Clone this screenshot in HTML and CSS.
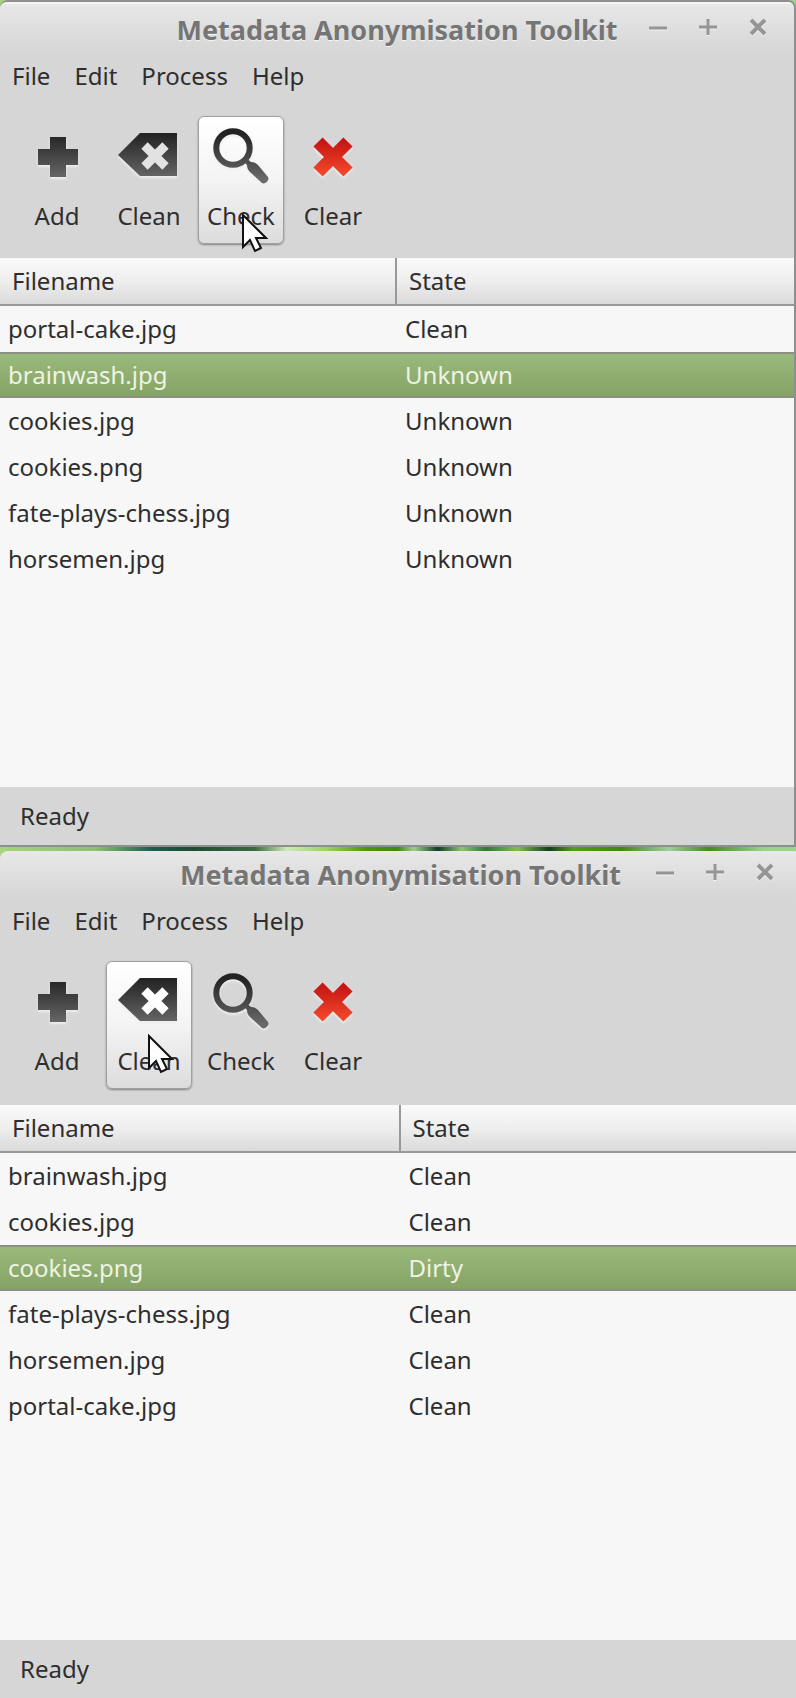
FILE: index.html
```html
<!DOCTYPE html>
<html lang="en">
<head>
    <meta charset="UTF-8">
    <meta name="viewport" content="width=device-width, initial-scale=1.0">
    <title>Metadata Anonymisation Toolkit</title>
    <link rel="stylesheet" href="styles.css">
</head>
<body>

    <!-- shared icons -->
    <svg class="sprite" aria-hidden="true">
        <defs>
            <linearGradient id="dark" gradientUnits="userSpaceOnUse" x1="0" y1="9" x2="0" y2="56">
                <stop offset="0" stop-color="#222"/>
                <stop offset="1" stop-color="#6a6a6a"/>
            </linearGradient>
            <linearGradient id="red" gradientUnits="userSpaceOnUse" x1="0" y1="13" x2="0" y2="52">
                <stop offset="0" stop-color="#c01010"/>
                <stop offset="1" stop-color="#f54a2c"/>
            </linearGradient>
        </defs>
        <symbol id="icon-add" viewBox="0 0 64 64">
            <path fill="url(#dark)" d="M25 13h16v12h12v16H41v12H25V41H13V25h12z"/>
        </symbol>
        <symbol id="icon-clean" viewBox="0 0 64 64">
            <path fill="url(#dark)" d="M1 31L23 9h37v43H23z"/>
            <path stroke="currentColor" stroke-width="9" d="M27.500 21.500l21 21M48.500 21.500l-21 21"/>
        </symbol>
        <symbol id="icon-check" viewBox="0 0 64 64">
            <circle cx="24" cy="24" r="16.700" fill="none" stroke="url(#dark)" stroke-width="6"/>
            <path fill="url(#dark)" d="M34 37l3-3 5 4c3 0 5 1 7 3l10 12c2 3-3 8-6 6L41 48c-2-2-3-4-3-7z"/>
        </symbol>
        <symbol id="icon-clear" viewBox="0 0 64 64">
            <path stroke="url(#red)" stroke-width="13" d="M17 18l30 30M47 18L17 48"/>
        </symbol>
        <symbol id="pointer" viewBox="0 0 26 40">
            <path fill="#fff" stroke="#111" stroke-width="2" d="M1 2v32l7-7 5 11 6-3-5-10h10z"/>
        </symbol>
        <symbol id="win-min" viewBox="0 0 20 20">
            <path stroke="currentColor" stroke-width="3" d="M1 11h18"/>
        </symbol>
        <symbol id="win-max" viewBox="0 0 20 20">
            <path stroke="currentColor" stroke-width="3" d="M1 10h18M10 2v16"/>
        </symbol>
        <symbol id="win-close" viewBox="0 0 20 20">
            <path stroke="currentColor" stroke-width="4" d="M3 3l14 14M17 3L3 17"/>
        </symbol>
    </svg>

    <section class="window framed">
        <header class="titlebar">
            <h1>Metadata Anonymisation Toolkit</h1>
            <div class="controls">
                <button type="button" aria-label="Minimize"><svg><use href="#win-min"/></svg></button>
                <button type="button" aria-label="Maximize"><svg><use href="#win-max"/></svg></button>
                <button type="button" aria-label="Close"><svg><use href="#win-close"/></svg></button>
            </div>
        </header>
        <nav class="menubar">
            <button type="button">File</button>
            <button type="button">Edit</button>
            <button type="button">Process</button>
            <button type="button">Help</button>
        </nav>
        <div class="toolbar">
            <button type="button"><svg><use href="#icon-add"/></svg>Add</button>
            <button type="button"><svg><use href="#icon-clean"/></svg>Clean</button>
            <button type="button" class="active"><svg><use href="#icon-check"/></svg>Check<svg class="pointer on-check"><use href="#pointer"/></svg></button>
            <button type="button"><svg><use href="#icon-clear"/></svg>Clear</button>
        </div>
        <div class="files">
            <table>
                <thead>
                    <tr><th>Filename</th><th>State</th></tr>
                </thead>
                <tbody>
                    <tr><td>portal-cake.jpg</td><td>Clean</td></tr>
                    <tr class="selected"><td>brainwash.jpg</td><td>Unknown</td></tr>
                    <tr><td>cookies.jpg</td><td>Unknown</td></tr>
                    <tr><td>cookies.png</td><td>Unknown</td></tr>
                    <tr><td>fate-plays-chess.jpg</td><td>Unknown</td></tr>
                    <tr><td>horsemen.jpg</td><td>Unknown</td></tr>
                </tbody>
            </table>
        </div>
        <footer class="statusbar">Ready</footer>
    </section>

    <section class="window overhang">
        <header class="titlebar">
            <h1>Metadata Anonymisation Toolkit</h1>
            <div class="controls">
                <button type="button" aria-label="Minimize"><svg><use href="#win-min"/></svg></button>
                <button type="button" aria-label="Maximize"><svg><use href="#win-max"/></svg></button>
                <button type="button" aria-label="Close"><svg><use href="#win-close"/></svg></button>
            </div>
        </header>
        <nav class="menubar">
            <button type="button">File</button>
            <button type="button">Edit</button>
            <button type="button">Process</button>
            <button type="button">Help</button>
        </nav>
        <div class="toolbar">
            <button type="button"><svg><use href="#icon-add"/></svg>Add</button>
            <button type="button" class="active"><svg><use href="#icon-clean"/></svg>Clean<svg class="pointer on-clean"><use href="#pointer"/></svg></button>
            <button type="button"><svg><use href="#icon-check"/></svg>Check</button>
            <button type="button"><svg><use href="#icon-clear"/></svg>Clear</button>
        </div>
        <div class="files">
            <table>
                <thead>
                    <tr><th>Filename</th><th>State</th></tr>
                </thead>
                <tbody>
                    <tr><td>brainwash.jpg</td><td>Clean</td></tr>
                    <tr><td>cookies.jpg</td><td>Clean</td></tr>
                    <tr class="selected"><td>cookies.png</td><td>Dirty</td></tr>
                    <tr><td>fate-plays-chess.jpg</td><td>Clean</td></tr>
                    <tr><td>horsemen.jpg</td><td>Clean</td></tr>
                    <tr><td>portal-cake.jpg</td><td>Clean</td></tr>
                </tbody>
            </table>
        </div>
        <footer class="statusbar">Ready</footer>
    </section>

</body>
</html>
```
FILE: styles.css
```css
body {
    margin: 0;
    min-height: 100vh;
    display: grid;
    grid-template-rows: 1fr 1fr;
    gap: 4px;
    overflow-x: hidden;
    font-family: "Noto Sans", sans-serif;
    font-size: 24px;
    line-height: 32px;
    color: #2e2e2e;
    /* wallpaper seen between the windows */
    background: linear-gradient(90deg, #a6d47a 0%, #8fc070 12%, #17614f 19%, #1d4b35 24%, #3a6b3d 32%, #cfe8b8 36%, #9bd45e 41%, #4f9412 46%, #3f8a10 50%, #9fcf86 52%, #0e3f24 55%, #8cc66a 58%, #2c7a30 61%, #83bd4e 65%, #123f1c 69%, #4fa01c 72%, #3b8a10 78%, #9fce9a 84%, #3f8e1c 89%, #9ad487 96%);
}

button {
    border: 0;
    padding: 0;
    background: none;
    font: inherit;
    color: inherit;
}

.sprite {
    position: absolute;
    width: 0;
    height: 0;
}

.window {
    display: flex;
    flex-direction: column;
    overflow: hidden;
    background-color: #d6d6d6;
    border-radius: 8px 8px 0 0;
}

.framed {
    border: 2px solid #8f8f8f;
    border-left: 0;
}

/* second window runs past the right edge of the screen */
.overhang {
    margin-right: -5px;
}

.titlebar {
    display: grid;
    grid-template-columns: 1fr auto 1fr;
    padding: 12px 11px 6px;
    background: linear-gradient(#e8e8e8, #d6d6d6);
    box-shadow: inset 0 2px #f4f4f4;
}

.overhang .titlebar {
    padding-top: 8px;
    box-shadow: none;
}

.titlebar h1 {
    grid-column: 2;
    margin: 0;
    font-size: 27px;
    line-height: 32px;
    color: #757575;
    text-shadow: 0 1px #f4f4f4;
}

.controls {
    display: flex;
    justify-content: flex-end;
    color: #959595;
}

.controls button {
    width: 50px;
    height: 26px;
}

.controls svg {
    display: block;
    width: 20px;
    height: 20px;
    margin: 0 auto;
    filter: drop-shadow(0 1px 0 #f4f4f4);
}

.menubar {
    display: flex;
    padding: 8px 0;
}

.menubar button {
    padding: 0 12px;
}

.toolbar {
    display: flex;
    gap: 6px;
    padding: 16px 14px 14px;
}

.overhang .toolbar {
    padding-bottom: 16px;
}

.toolbar button {
    position: relative;
    display: flex;
    flex-direction: column;
    align-items: center;
    gap: 12px;
    width: 86px;
    padding: 7px 0 11px;
    border: 1px solid transparent;
    border-radius: 6px;
}

.toolbar svg {
    width: 64px;
    height: 64px;
    color: #e2e2e2;
    filter: drop-shadow(0 2px 1px #eee);
}

.toolbar .active {
    border-color: #a0a0a0;
    background: linear-gradient(#fff, #f4f4f4 50%, #dcdcdc);
    box-shadow: 0 1px 2px rgba(0, 0, 0, 0.4);
}

.toolbar .active svg {
    color: #fff;
}

.toolbar .pointer {
    position: absolute;
    width: 26px;
    height: 40px;
    filter: none;
}

.on-check {
    left: 43px;
    top: 96px;
}

.on-clean {
    left: 41px;
    top: 72px;
}

.files {
    flex: 1;
    background-color: #f7f7f7;
}

table {
    width: 100%;
    table-layout: fixed;
    border-collapse: separate;
    border-spacing: 0;
}

th, td {
    text-align: left;
    font-weight: normal;
    box-sizing: border-box;
}

th {
    height: 48px;
    padding: 0 12px;
    background: linear-gradient(#fafafa, #eee 50%, #dadada);
    border-bottom: 2px solid #999;
}

th:first-child {
    border-right: 2px solid #999;
}

td {
    height: 46px;
    padding: 0 8px;
}

.selected td {
    color: #eef3e4;
    background: linear-gradient(#9ab97c, #85a364);
    border-top: 2px solid #8b9080;
    border-bottom: 2px solid #8b9080;
}

.statusbar {
    padding: 13px 20px;
}
```
